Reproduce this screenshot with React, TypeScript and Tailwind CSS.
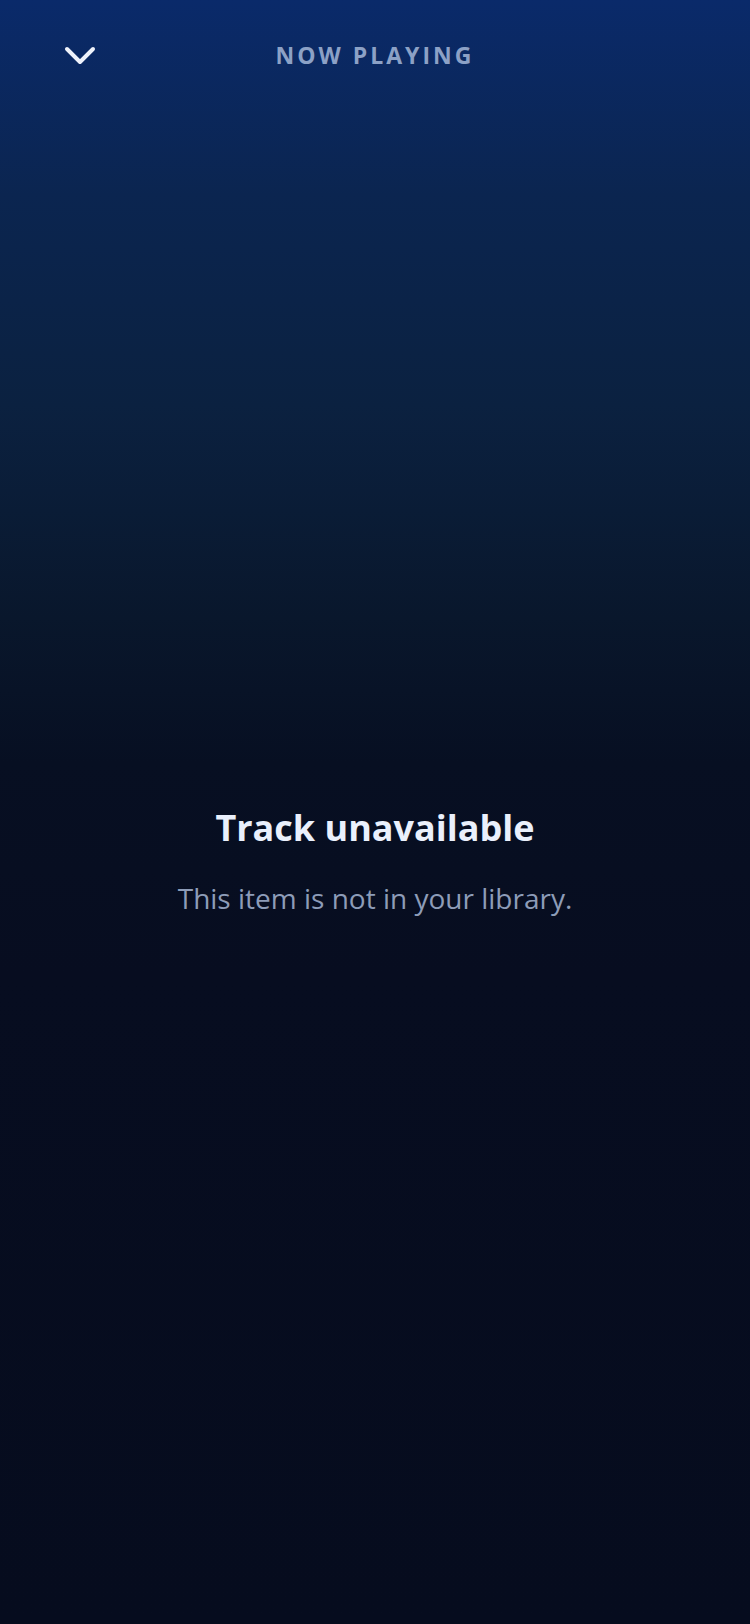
export default function App() {
  return (
    <div
      className="flex min-h-[1624px] w-full flex-col bg-[linear-gradient(180deg,#0a2a6a_0%,#0b2550_12%,#0b2140_25%,#09172c_38%,#070f22_47%,#070d20_60%,#060c1e_100%)]"
      style={{ fontFamily: '"Open Sans", "Noto Sans", sans-serif' }}
    >
      <header className="relative flex h-[110px] items-center justify-center">
        <button className="absolute left-[62px] top-[42px] flex h-[28px] w-[36px] items-center justify-center">
          <svg width="34" height="22" viewBox="0 0 34 22" fill="none">
            <path
              d="M4 4 L17 17 L30 4"
              stroke="#eef2fb"
              strokeWidth="4"
              strokeLinecap="round"
              strokeLinejoin="round"
            />
          </svg>
        </button>
        <h1 className="-mt-[0px] text-[23px] font-bold tracking-[3px] text-[#8ca1c6]">NOW PLAYING</h1>
      </header>
      <main className="flex flex-col items-center pt-[693px]">
        <h2 className="text-[36px] font-bold leading-[50px] text-[#eaf0fc]">Track unavailable</h2>
        <p className="mt-[26px] text-[28px] leading-[38px] text-[#8d9cb8]">This item is not in your library.</p>
      </main>
    </div>
  );
}
